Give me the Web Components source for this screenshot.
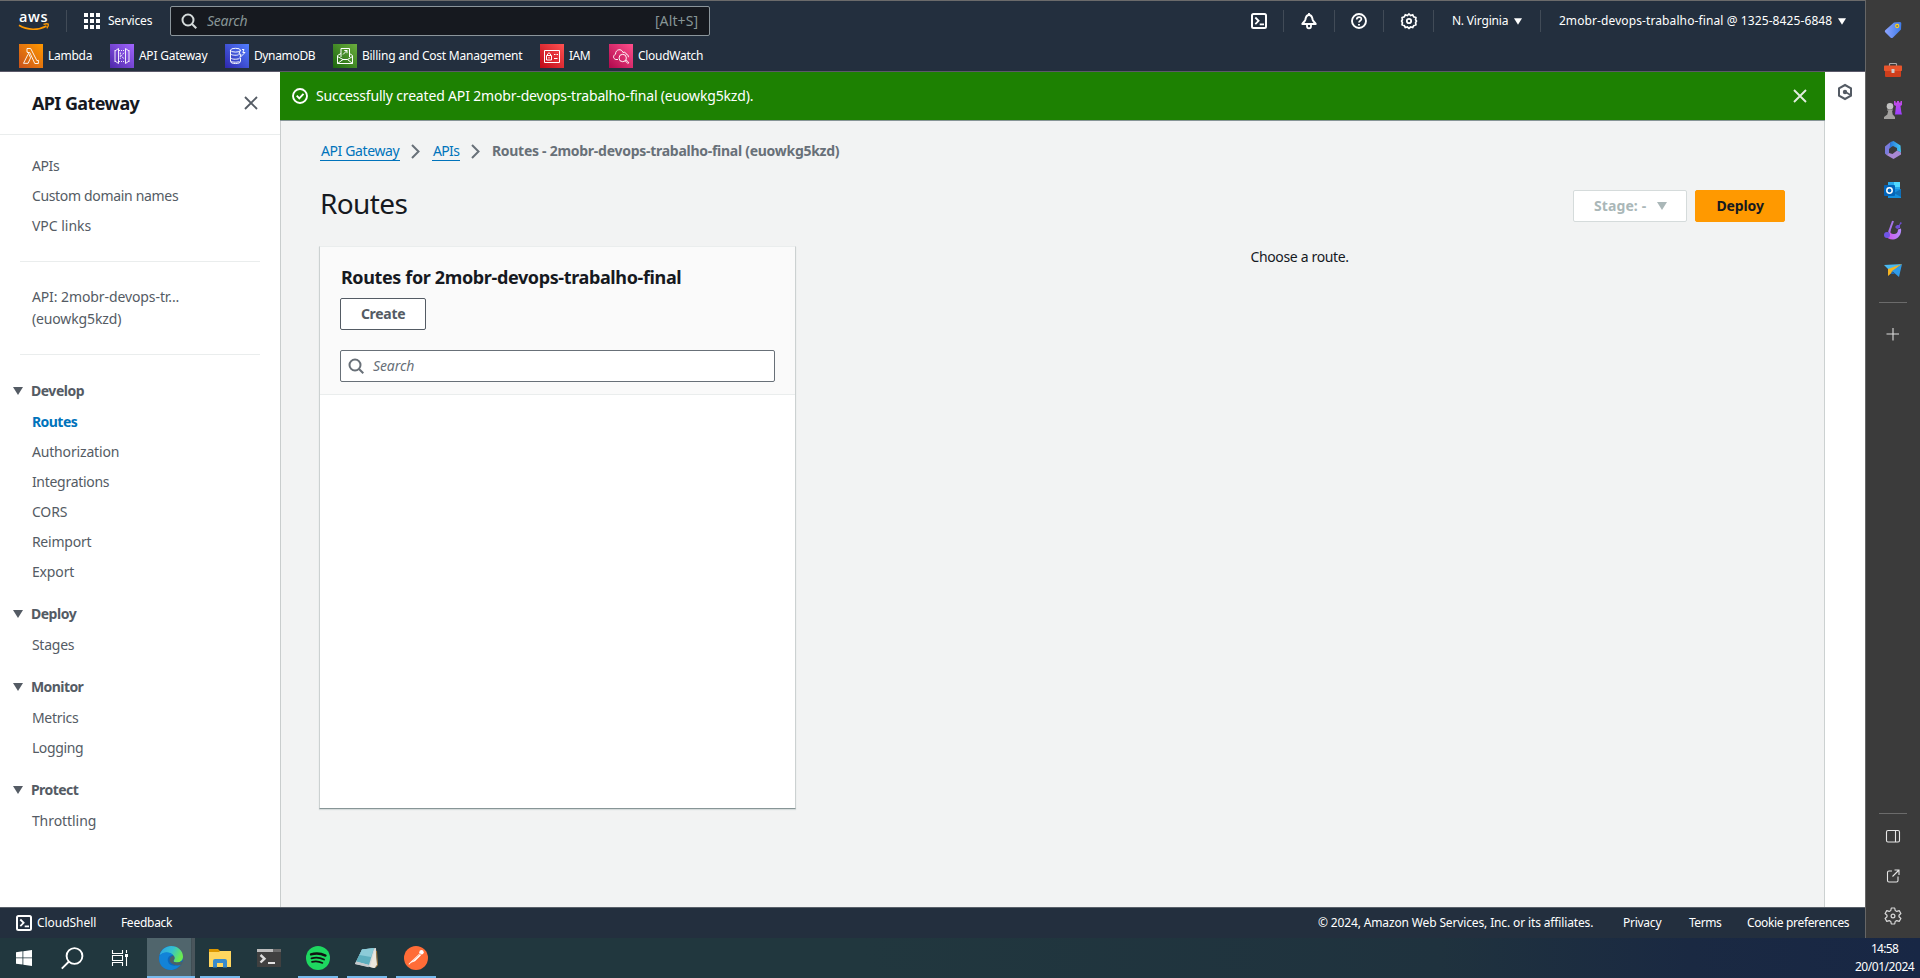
<!DOCTYPE html>
<html lang="en">
<head>
<meta charset="utf-8">
<title>API Gateway - Routes</title>
<style>
html,body{margin:0;height:100%}
body{font:14px/22px "Noto Sans","Open Sans",sans-serif;color:#16191f;overflow:hidden;background:#f2f3f3}
</style>
</head>
<body>
<desktop-screen></desktop-screen>
<script>
const ICONS = {
aws:['0 0 32 20','<path d="M1 14.2c8.500 5.300 19.500 5.200 27.500.8" fill="none" stroke="#f90" stroke-width="1.700"/><path d="M25.500 13.300q3.500-1 4.800-.2.600 1.600-1.500 4.300" fill="none" stroke="#f90" stroke-width="1.300"/>'],
grid:['0 0 16 16','<path fill="#fff" d="M0 0h4v4H0zM6 0h4v4H6zM12 0h4v4h-4zM0 6h4v4H0zM6 6h4v4H6zM12 6h4v4h-4zM0 12h4v4H0zM6 12h4v4H6zM12 12h4v4h-4z"/>'],
search:['0 0 16 16','<g fill="none" stroke="currentColor" stroke-width="2"><circle cx="7" cy="7" r="5.500"/><path d="m11 11 4.300 4.300"/></g>'],
shell:['0 0 16 16','<g fill="none" stroke="#fff" stroke-width="2"><rect x="1" y="1" width="14" height="14" rx="1.500"/><path d="m4.300 4.500 3.300 3.300-3.300 3.300M8.700 11.300H13" stroke-width="1.800"/></g>'],
bell:['0 0 16 16','<path d="M8 2C5.500 2 4.800 4 4.400 6.500 4 8.300 2.300 9.300 1.300 11h13.400c-1-1.700-2.700-2.700-3.100-4.500C11.200 4 10.500 2 8 2Z" fill="none" stroke="#fff" stroke-width="2" stroke-linejoin="round"/><path d="M8 0v2M6 12v1.300a2 2 0 0 0 4 0V12" fill="none" stroke="#fff" stroke-width="1.800"/>'],
help:['0 0 16 16','<g fill="none" stroke="#fff" stroke-width="1.900"><circle cx="8" cy="8" r="7"/><path d="M5.700 6.500C5.800 3.200 10.400 3.400 10.400 6c0 1.800-2.400 1.600-2.400 3.500" stroke-width="1.700"/><path d="M8 10.900v1.700"/></g>'],
gear:['0 0 16 16','<path d="m8 1 1.600 1.500 2.100-.7 1 2 2.200.7-.3 2.200L15.500 8l-.9 1.700.3 2.100-2.200.8-1 1.900-2.100-.5L8 15.300l-1.600-1.300-2.100.5-1-1.900-2.200-.8.300-2.100L.6 8l.8-1.300-.3-2.200 2.200-.7 1-2 2.100.7Z" fill="none" stroke="#fff" stroke-width="1.700"/><circle cx="8" cy="8" r="2.200" fill="none" stroke="#fff" stroke-width="1.800"/>'],
caret:['0 0 10 8','<path d="M0 0h10L5 8Z" fill="currentColor"/>'],
close:['0 0 14 14','<path d="m1 1 12 12M13 1 1 13" fill="none" stroke="currentColor" stroke-width="1.900"/>'],
check:['0 0 16 16','<g fill="none" stroke="#fff" stroke-width="1.900"><circle cx="8" cy="8" r="7"/><path d="m4.700 7.700 2.600 2.700 4.200-4.500"/></g>'],
chev:['0 0 9 15','<path d="m1 1 6.500 6.500L1 14" fill="none" stroke="#687078" stroke-width="2"/>'],
hex:['0 0 14 16','<path d="m7 1 6 3.300v7.400L7 15l-6-3.300V4.300Z" fill="none" stroke="#545b64" stroke-width="2"/><circle cx="7" cy="8" r="2.200" fill="#545b64"/><path d="m7.500 8 5 3" stroke="#545b64" stroke-width="1.600"/>'],
lambda:['0 0 24 24','<defs><linearGradient id="g" x1="0" y1="1" x2="1" y2="0"><stop stop-color="#c8511b"/><stop offset="1" stop-color="#f90"/></linearGradient></defs><path fill="url(#g)" d="M0 0h24v24H0z"/><path d="M9 10.300 4.500 19.300h4.600l2.500-5.500L9 8.200H8V4.500h3.700l6.200 12.200 1.500-.4v3.200h-3.600l-4-8.700-1-2.300H8.500" fill="none" stroke="#fff" stroke-width=".9"/>'],
apigw:['0 0 24 24','<defs><linearGradient id="g" x1="0" y1="1" x2="1" y2="0"><stop stop-color="#4d27a8"/><stop offset="1" stop-color="#a166ff"/></linearGradient></defs><path fill="url(#g)" d="M0 0h24v24H0z"/><g fill="none" stroke="#fff" stroke-width=".9"><path d="M5 6v12M5 7l3.500-2.500v15L5 17M19 6v12M19 7l-3.500-2.500v15L19 17"/><path d="M9 6.500h6M9 17.500h6" stroke-dasharray="1 1"/><path d="M10.300 8.500v6.300M14 8.700l-2.600 3L14 15" stroke-dasharray="2 .8"/></g>'],
dynamo:['0 0 24 24','<defs><linearGradient id="g" x1="0" y1="1" x2="1" y2="0"><stop stop-color="#2e27ad"/><stop offset="1" stop-color="#527fff"/></linearGradient></defs><path fill="url(#g)" d="M0 0h24v24H0z"/><g fill="none" stroke="#fff" stroke-width=".95"><ellipse cx="10.500" cy="6.200" rx="5" ry="1.900"/><path d="M5.500 6v11.500c0 2.700 10 2.700 10 0V14M5.500 9.300c0 2 5.500 2.400 8 1.500M5.500 13.300c0 2.200 6 2.400 9 1.200M5.500 16.300c0 2 6 2.400 9 1.200M17 5.500h2l-1.200 3H20l-5 5 .9-3.300h-2L15.500 6"/></g>'],
billing:['0 0 24 24','<defs><linearGradient id="g" x1="0" y1="1" x2="1" y2="0"><stop stop-color="#1b660f"/><stop offset="1" stop-color="#6cae3e"/></linearGradient></defs><path fill="url(#g)" d="M0 0h24v24H0z"/><g fill="none" stroke="#fff" stroke-width="1"><path d="M8 13V4.500h8.500V13M10 10.500l4-4M11.300 6.500H14v2.700M8 9.500l-3.500 2v8h15v-8l-3-2M4.500 12.500l5.500 3M19.500 12.500l-5 3M4.500 19.500l5.500-4h4.500l5 4"/></g>'],
iam:['0 0 24 24','<defs><linearGradient id="g" x1="0" y1="1" x2="1" y2="0"><stop stop-color="#bd0816"/><stop offset="1" stop-color="#ff5252"/></linearGradient></defs><path fill="url(#g)" d="M0 0h24v24H0z"/><g fill="none" stroke="#fff" stroke-width="1"><path d="M4.500 6.500h15v12h-15zM6.500 11.500h5v4.500h-5zM7.500 11.500v-1.500q1.500-2.500 3 0v1.500M14 10.500h1.500M16.500 10.500H18M14 14.500h3.500"/><path d="M9 13v1.500"/></g>'],
watch:['0 0 24 24','<defs><linearGradient id="g" x1="0" y1="1" x2="1" y2="0"><stop stop-color="#b0084d"/><stop offset="1" stop-color="#ff4f8b"/></linearGradient></defs><path fill="url(#g)" d="M0 0h24v24H0z"/><g fill="none" stroke="#fff" stroke-width=".95"><path d="M9 15.500H6.800C4 14.800 3.800 11.500 6.500 10.200 6.500 5.200 12.500 4 14 8.500c2-1 3 .5 3 1.500 1.500.3 2.500 1.300 2.400 3.200"/><circle cx="13.700" cy="14" r="3.700"/><path d="m16 16.500 2.800 3q1-.2.800-1.200L17 15.800"/></g>'],
tag:['0 0 18 18','<defs><linearGradient id="g"><stop stop-color="#8ea4ff"/><stop offset="1" stop-color="#3e7be8"/></linearGradient></defs><path d="M10 1.500 16 1q1.500 0 1.300 1.500L17 8.500 9 16.500q-1.300 1-2.500 0L1.200 11.300q-.9-1 0-2Z" fill="url(#g)"/><circle cx="13.200" cy="5" r="1.600" fill="#777" stroke="#ffd11a" stroke-width="1.100"/>'],
toolbox:['0 0 18 18','<path d="M5.500 5V3.300q0-.8.800-.8h5.400q.8 0 .8.800V5" fill="none" stroke="#aaa" stroke-width="1.200"/><rect y="4.500" width="18" height="5.500" rx=".7" fill="#e9552c"/><path d="M1 10h16v5q0 1-1 1H2q-1 0-1-1Z" fill="#cf3e1c"/><rect x="7.500" y="8" width="3" height="4" rx=".5" fill="#ccc"/>'],
chess:['0 0 18 18','<defs><linearGradient id="g" y1="0" y2="1" x2="0"><stop stop-color="#c44be4"/><stop offset="1" stop-color="#9b40ff"/></linearGradient></defs><path d="M10 0h1.500v1.500H13V0h2v1.500h1.500V0H18v4l-1.500 1 .8 6 .7 2.500h-7L12 5l-2-1Z" fill="url(#g)"/><circle cx="6" cy="5.300" r="3.300" fill="#c2c2c2"/><path d="M3 8.500h6v1H8l.7 4L11 16v2H0v-2l3.300-2.500 1-4H3Z" fill="#a3a19f"/>'],
m365:['0 0 18 18','<defs><linearGradient id="g"><stop stop-color="#2771d8"/><stop offset="1" stop-color="#43c9f5"/></linearGradient></defs><path d="M1 5.500 6.500 1v5.500L5 8v4.500L2.500 14 1 12.500Z" fill="#7a7bdc"/><path d="m6.500 1 3-1 7 4.500.5 7-4-2V7l-4-2-3.500 2Z" fill="url(#g)"/><path d="m5 12 3.500 1 4.500-3.500 4 2v2L9.500 18l-7-4Z" fill="#a889d3"/>'],
outlook:['0 0 18 18','<path d="M4 1h12v10H4z" fill="#28a8ea"/><path d="M10 1h6v5h-6z" fill="#50d9ff"/><path d="M4 8h13v9H4z" fill="#1490df"/><path d="M17 8v8l-7-4Z" fill="#0f6fb8"/><rect y="4" width="11" height="11" rx="1" fill="#0364b8"/><circle cx="5.500" cy="9.500" r="2.700" fill="none" stroke="#fff" stroke-width="1.500"/>'],
design:['0 0 18 18','<defs><linearGradient id="g"><stop stop-color="#d04ee5"/><stop offset="1" stop-color="#b58cff"/></linearGradient></defs><path d="M7 8.500Q5 12.500 9 13c3 .5 5-1 5-4.500l3-1C18 13 14 18.500 9 18.500q-5.500 0-7-4Z" fill="url(#g)"/><path d="M9 0 5 11" stroke="#a675e9" stroke-width="2"/><circle cx="3" cy="14" r="3" fill="#6f55e7"/><path d="m11 6 2-2 2 0 1.500-3L18 2l-2 2v3l-3 1Z" fill="#6e4ed5"/>'],
plane:['0 0 18 18','<path d="M0 4 18 3 5 9Z" fill="#49b9f0"/><path d="M18 3 4 8v7Z" fill="#f7b522"/><path d="M18 3 8 10l7 6Z" fill="#2f9be8"/><path d="m8 10-1 3 4 0Z" fill="#1767b8"/>'],
plus:['0 0 16 16','<path d="M8 2v12.500M1.500 8H14" stroke="#ddd" stroke-width="1.100"/>'],
panel:['0 0 16 16','<g fill="none" stroke="#e6e6e6" stroke-width="1.100"><rect x="1.500" y="2.500" width="13" height="11.500" rx="1.500"/><path d="M10.500 2.500V14"/></g>'],
ext:['0 0 16 16','<path d="M7 3H4Q2.500 3 2.500 4.500v8Q2.500 14 4 14h7.500q1.500 0 1.500-1.500V8.500M9.500 2h4.500v5M14 2 7.500 8.500" fill="none" stroke="#e6e6e6" stroke-width="1.100"/>'],
cog:['0 0 18 18','<path d="M7.300 1h3.400l.5 2.500 1.600.9 2.400-.8 1.700 2.900L15 8.200v1.600l1.900 1.700-1.700 2.900-2.400-.8-1.600.9-.5 2.500H7.300l-.5-2.500-1.600-.9-2.400.8-1.700-2.900L3 9.800V8.200L1.100 6.500l1.700-2.900 2.400.8 1.600-.9Z" fill="none" stroke="#d8d8d8" stroke-width="1.200" stroke-linejoin="round"/><circle cx="9" cy="9" r="1.900" fill="none" stroke="#d8d8d8" stroke-width="1.200"/>'],
win:['0 0 16 16','<path d="M0 2.200 6.500 1.300v6.200H0zM7.300 1.200 16 0v7.500H7.300zM0 8.300h6.500v6.300L0 13.700zM7.300 8.300H16V16l-8.700-1.200z" fill="#fff"/>'],
find:['0 0 22 22','<g fill="none" stroke="#fff" stroke-width="1.900"><circle cx="13.500" cy="9" r="7.900"/><path d="M8 14.500 .8 21.700"/></g>'],
tasks:['0 0 16 16','<path d="M.5 0v3.500h10V0M.5 16v-3.500h10V16M.5 5.500h10v5H.5zM14.500 0v3M14.500 7v9" fill="none" stroke="#fff" stroke-width="1.100"/><path d="M13 4h3v3h-3z" fill="#fff"/>'],
edge:['0 0 24 24','<defs><linearGradient id="g" x1="0" x2="1" y2=".4"><stop stop-color="#2b9fe8"/><stop offset=".55" stop-color="#35c1d0"/><stop offset="1" stop-color="#6bea50"/></linearGradient></defs><circle cx="12" cy="12" r="12" fill="#0d68bd"/><path d="M.5 9.500C2 3.500 7 0 12 0c7 0 12 5 12 10.500 0 4-3 6-6 6-2.500 0-4-1-3.500-2 1-1.500 1.200-3 .5-4C13.500 6.500 5 5 .5 9.500Z" fill="url(#g)"/><path d="M.2 10.500C3 5 11 5 14 9c-4 0-6 3-5 6.500 1 3.500 5 6 13 2.500-3 5-9 7-13.500 5.500C2 22-.5 16 .2 10.500Z" fill="#1283d8"/><path d="M14.700 9.500q2 3-.5 5.500c1 1.800 5 2 7.500.5l2 1-1.500 2.200c-2 1-4.500 1-6.200.3C9 17 9 11 14.700 9.500Z" fill="#4c6069"/>'],
files:['0 0 22 19','<path d="M0 2h22v16H0z" fill="#ffd65f"/><path d="M0 0h9l2 2-1 1H0Z" fill="#dc9700"/><path d="M4 18.500V12q0-2 2-2h10q2 0 2 2v6.500h-4V14H8v4.500Z" fill="#388bcc"/>'],
term:['0 0 24 18','<path d="M0 0h24v18H0z" fill="#404040"/><path d="M0 0h16v3H0z" fill="#bdbdbd"/><path d="M16 0h8v3h-8z" fill="#6b6b6b"/><path d="m3.500 6 4 3.700-4 3.800" fill="none" stroke="#ddd" stroke-width="2.400"/><path d="M11 14h7" stroke="#fff" stroke-width="1.700"/>'],
spotify:['0 0 24 24','<circle cx="12" cy="12" r="12" fill="#1ed760"/><g fill="none" stroke="#111" stroke-linecap="round"><path d="M5 8.400c5-1.500 10-1 14.500 1.200" stroke-width="2.300"/><path d="M5.500 12.300c4.400-1.200 8.500-.8 12.500 1.200" stroke-width="1.900"/><path d="M6 15.900c4-1 7-.6 10.500 1.100" stroke-width="1.600"/></g>'],
note:['0 0 24 24','<path d="M7 3.500 21 2l1 17-2 3L0 18Z" fill="#d9dadb"/><path d="M7 3.500 19 2l-5 17L1 15.500Z" fill="#5eafbf"/><path d="m7 3.500 12-1.500-3 9L4.500 9Z" fill="#8ccbd8"/><path d="m1 15.500 13 3.500-.5 2.200L0 18Z" fill="#c4c9cc"/><path d="m20 3 2 16-3 3-4-1Z" fill="#ece8de"/><path d="m21.500 5 1 14-2 2.500" fill="none" stroke="#a37b3c"/>'],
postman:['0 0 24 24','<circle cx="12" cy="12" r="12" fill="#ff6c37"/><circle cx="17.500" cy="6.300" r="2.200" fill="#fff"/><path d="m15.500 7.500 1.500 1.700-6 6-4 1.500-2 2-.5-.7 3-3Z" fill="#fff"/><path d="m8.500 15 8-7.500" stroke="#ff9a72" stroke-width=".7"/>']
};

/* Registers an element whose shadow root is cloned from the given markup. */
function component(name, html, setup) {
  const tpl = document.createElement('template');
  tpl.innerHTML = '<style>:host{box-sizing:border-box}*{box-sizing:border-box}</style>' + html;
  customElements.define(name, class extends HTMLElement {
    constructor() {
      super();
      this.attachShadow({mode:'open'}).append(tpl.content.cloneNode(true));
    }
    connectedCallback() { if (setup && !this.ready) { this.ready = true; setup.call(this, this.shadowRoot); } }
  });
}

component('desktop-screen', `<style>
:host{display:grid;grid-template:938px 40px/1fr 55px;width:1920px;height:978px}
console-page{min-width:0}task-bar{grid-column:1/3}
</style><console-page></console-page><edge-rail></edge-rail><task-bar></task-bar>`);

component('console-page', `<style>
:host{display:grid;grid-template-rows:72px 835px 31px}
.mid{display:grid;grid-template-columns:281px 1fr 40px}
.tools{background:#fff;display:flex;justify-content:center;padding:12px 0}
main{display:flex;flex-direction:column;border-right:1px solid #ccd1d1;background:#f2f3f3;min-width:0}
.main{padding:20px 39px 0 38px}
</style><aws-header></aws-header>
<div class="mid"><side-nav></side-nav><main><flash-bar></flash-bar><div class="main"><page-crumbs></page-crumbs><routes-view></routes-view></div></main>
<div class="tools"><ui-icon name="hex" w="14" h="16"></ui-icon></div></div><aws-footer></aws-footer>`);

component('aws-header', `<style>
:host{display:block;background:#232f3e;color:#fff;border-top:1px solid #6b6b6b;border-bottom:1px solid #5b5969;font-size:12px}
.top{display:flex;align-items:center;height:40px;padding-left:18px}
.logo{display:grid;width:32px;height:22px;margin-right:16px}
.logo>*{grid-area:1/1}.logo b{font:600 14.500px/13px "Open Sans",sans-serif}
.logo ui-icon{align-self:start;margin-top:1px}
i.d{width:1px;height:22px;background:#414b57;flex:none}
.box{display:flex;align-items:center;width:540px;height:30px;border:1px solid #8b959b;border-radius:2px;background:#16191f;color:#879596;font-size:14px;margin-left:17px;padding:0 10px 0 10px}
.box ui-icon{color:#d5dbdb}.box em{margin-left:9px}.box span{margin-left:auto}
.right{display:flex;align-items:center;margin-left:541px}
.fav{display:flex;height:30px;align-items:center;padding-left:19px}
</style><div class="top"><div class="logo"><b><fit-text w="31">aws</fit-text></b><ui-icon name="aws" w="32" h="20"></ui-icon></div><i class="d"></i>
<ui-icon name="grid" w="16" h="16" style="margin:0 7px 0 17px"></ui-icon><fit-text w="46">Services</fit-text>
<div class="box"><ui-icon name="search" w="16" h="16"></ui-icon><em><fit-text w="42">Search</fit-text></em><span><fit-text w="45">[Alt+S]</fit-text></span></div>
<div class="right"><ui-icon name="shell" w="16" h="16"></ui-icon><i class="d" style="margin:0 17px 0 16px"></i><ui-icon name="bell" w="16" h="16"></ui-icon><i class="d" style="margin:0 16px 0 17px"></i><ui-icon name="help" w="16" h="16"></ui-icon><i class="d" style="margin:0 17px 0 16px"></i><ui-icon name="gear" w="16" h="16"></ui-icon><i class="d" style="margin:0 17px 0 16px"></i><fit-text w="58">N. Virginia</fit-text><ui-icon name="caret" w="8" h="7" style="margin-left:5px"></ui-icon><i class="d" style="margin:0 17px 0 18px"></i><fit-text w="275">2mobr-devops-trabalho-final @ 1325-8425-6848</fit-text><ui-icon name="caret" w="8" h="7" style="margin-left:5px"></ui-icon></div></div>
<div class="fav">
<fav-link icon="lambda" style="width:91px"><fit-text w="46">Lambda</fit-text></fav-link>
<fav-link icon="apigw" style="width:115px"><fit-text w="70">API Gateway</fit-text></fav-link>
<fav-link icon="dynamo" style="width:108px"><fit-text w="63">DynamoDB</fit-text></fav-link>
<fav-link icon="billing" style="width:207px"><fit-text w="162">Billing and Cost Management</fit-text></fav-link>
<fav-link icon="iam" style="width:69px"><fit-text w="23">IAM</fit-text></fav-link>
<fav-link icon="watch" style="width:110px"><fit-text w="67">CloudWatch</fit-text></fav-link></div>`);

component('fav-link', `<style>:host{display:flex;align-items:center;gap:4px;flex:none}</style><ui-icon w="24" h="24"></ui-icon><slot></slot>`,
function(r){ r.querySelector('ui-icon').setAttribute('name', this.getAttribute('icon')); });

component('side-nav', `<style>
:host{display:block;background:#fff;border-right:1px solid #c9cdcd;color:#545b64}
header{height:63px;display:flex;align-items:center;justify-content:space-between;padding:0 22px 0 31px;border-bottom:1px solid #eaeded}
h2{margin:0 0 1px;font-size:18px;line-height:24px;color:#16191f;font-weight:700}
nav{padding-top:16px}
hr{border:0;height:1px;background:#eaeded;margin:20px 20px 24px}
.api{padding:0 31px;height:44px;display:grid;grid-template-rows:22px 22px}
</style><header><h2><fit-text w="109">API Gateway</fit-text></h2><ui-icon name="close" w="14" h="14"></ui-icon></header>
<nav><nav-item><fit-text w="29">APIs</fit-text></nav-item><nav-item><fit-text w="148">Custom domain names</fit-text></nav-item><nav-item><fit-text w="61">VPC links</fit-text></nav-item>
<hr><div class="api"><fit-text w="149">API: 2mobr-devops-tr...</fit-text><fit-text w="91">(euowkg5kzd)</fit-text></div><hr style="margin-top:24px;margin-bottom:21px">
<nav-group><fit-text slot="title" w="55">Develop</fit-text>
<nav-item current><fit-text w="47">Routes</fit-text></nav-item><nav-item><fit-text w="89">Authorization</fit-text></nav-item><nav-item><fit-text w="79">Integrations</fit-text></nav-item><nav-item><fit-text w="37">CORS</fit-text></nav-item><nav-item><fit-text w="61">Reimport</fit-text></nav-item><nav-item><fit-text w="44">Export</fit-text></nav-item></nav-group>
<nav-group><fit-text slot="title" w="47">Deploy</fit-text><nav-item><fit-text w="44">Stages</fit-text></nav-item></nav-group>
<nav-group><fit-text slot="title" w="54">Monitor</fit-text><nav-item><fit-text w="48">Metrics</fit-text></nav-item><nav-item><fit-text w="53">Logging</fit-text></nav-item></nav-group>
<nav-group><fit-text slot="title" w="49">Protect</fit-text><nav-item><fit-text w="66">Throttling</fit-text></nav-item></nav-group></nav>`);
component('nav-item', `<style>:host{display:flex;align-items:center;height:30px;padding-left:31px}:host([current]){font-weight:700;color:#0073bb}</style><slot></slot>`);
component('nav-group', `<style>:host{display:block;margin-bottom:12px}.h{display:flex;align-items:center;height:31px;font-weight:700;padding:0 0 1px 13px;gap:7px}</style><div class="h"><ui-icon name="caret" w="10" h="8"></ui-icon><slot name="title"></slot></div><slot></slot>`);

component('flash-bar', `<style>
:host{display:flex;align-items:center;height:49px;background:#1d8102;color:#fff;border-bottom:1px solid #879596;margin:0 -1px;padding:0 18px 0 12px}
fit-text{margin-left:7px}.x{margin-left:auto;color:#e2ecdf}</style>
<ui-icon name="check" w="16" h="16"></ui-icon><fit-text w="439">Successfully created API 2mobr-devops-trabalho-final (euowkg5kzd).</fit-text><ui-icon class="x" name="close" w="14" h="14"></ui-icon>`);

component('page-crumbs', `<style>
:host{display:flex;align-items:center;height:20px;color:#687078;margin-left:1px}
a{color:#0073bb;border-bottom:1px solid #0073bb;height:20px;line-height:20px}
ui-icon{margin:0 12px 0 11px}a+ui-icon+a+ui-icon{margin-right:11px}</style>
<a><fit-text w="80">API Gateway</fit-text></a><ui-icon name="chev" w="9" h="15"></ui-icon><a><fit-text w="28">APIs</fit-text></a><ui-icon name="chev" w="9" h="15"></ui-icon><b><fit-text w="349">Routes - 2mobr-devops-trabalho-final (euowkg5kzd)</fit-text></b>`);

component('routes-view', `<style>
:host{display:block}
.head{display:flex;align-items:flex-start;height:60px;margin-top:25px}
h1{font:400 28px/36px "Noto Sans",sans-serif;margin:-1px auto 0 0}
.head ui-button{margin-top:4px}
.body{display:grid;grid-template-columns:477px 1fr;}
.hint{display:flex;justify-content:center;padding:0 0 0 18px;height:22px}
</style><div class="head"><h1><fit-text w="89">Routes</fit-text></h1><ui-button kind="off" style="width:114px;margin-right:8px"><fit-text w="54">Stage: -</fit-text><ui-icon name="caret" w="10" h="8" style="margin-left:10px"></ui-icon></ui-button><ui-button kind="main" style="width:90px"><fit-text w="49">Deploy</fit-text></ui-button></div>
<div class="body"><routes-card></routes-card><div class="hint"><fit-text w="100">Choose a route.</fit-text></div></div>`);

component('ui-button', `<style>:host{display:flex;align-items:center;justify-content:center;height:32px;border:1px solid #545b64;border-radius:2px;background:#fff;color:#545b64;font-weight:700}
:host([kind=off]){border-color:#d5dbdb;color:#aab7b8}:host([kind=main]){border-color:#f90;background:#f90;color:#16191f}</style><slot></slot>`);

component('routes-card', `<style>
:host{display:block;height:563px;background:#fff;border:1px solid #ccd1d1;border-top-color:#eaeded;border-bottom-color:#879596;box-shadow:0 1px 1px #d5dbdb}
header{background:#fafafa;border-bottom:1px solid #eaeded;height:148px;padding:19px 20px}
h2{font-size:18px;line-height:22px;margin:0 0 10px}
.s{display:flex;align-items:center;margin-top:20px;height:32px;border:1px solid #687078;border-radius:2px;background:#fff;color:#687078;padding-left:7px;gap:8px}
</style><header><h2><fit-text w="342">Routes for 2mobr-devops-trabalho-final</fit-text></h2><ui-button style="width:86px"><fit-text w="46">Create</fit-text></ui-button>
<div class="s"><ui-icon name="search" w="16" h="16"></ui-icon><em><fit-text w="43">Search</fit-text></em></div></header>`);

component('aws-footer', `<style>
:host{display:flex;align-items:center;background:#232f3e;color:#fff;border-top:1px solid #596069;padding:0 15px 0 16px;font-size:12px}
.r{display:flex;margin-left:auto;gap:26px}</style>
<ui-icon name="shell" w="16" h="16" style="margin-right:4px"></ui-icon><fit-text w="61">CloudShell</fit-text><fit-text w="53" style="margin-left:23px">Feedback</fit-text>
<div class="r"><fit-text w="277" style="margin-right:2px">© 2024, Amazon Web Services, Inc. or its affiliates.</fit-text><fit-text w="40">Privacy</fit-text><fit-text w="34" style="margin-right:-2px">Terms</fit-text><fit-text w="104">Cookie preferences</fit-text></div>`);

component('edge-rail', `<style>
:host{display:flex;flex-direction:column;align-items:center;background:#3b3b3b;border-left:1px solid #666;padding:21px 0 13px}
.a,.b{display:flex;flex-direction:column;align-items:center}.a{gap:22px}.b{margin-top:auto;gap:24px}
hr{width:28px;height:1px;border:0;background:#6b6b6b;margin:0}.a hr{margin:1px 0}</style>
<div class="a"><ui-icon name="tag" w="18" h="18"></ui-icon><ui-icon name="toolbox" w="18" h="18"></ui-icon><ui-icon name="chess" w="18" h="18"></ui-icon><ui-icon name="m365" w="18" h="18"></ui-icon><ui-icon name="outlook" w="18" h="18"></ui-icon><ui-icon name="design" w="18" h="18"></ui-icon><ui-icon name="plane" w="18" h="18"></ui-icon><hr><ui-icon name="plus" w="16" h="16"></ui-icon></div>
<div class="b"><hr style="margin-bottom:-10px"><ui-icon name="panel" w="16" h="16"></ui-icon><ui-icon name="ext" w="16" h="16"></ui-icon><ui-icon name="cog" w="18" h="18" style="margin-top:-1px"></ui-icon></div>`);

component('task-bar', `<style>
:host{display:flex;background:linear-gradient(90deg,#21373e 0%,#21373e 45%,#1f323e 75%,#1a2942 88%,#182745 100%);padding-right:5px}
.clock{margin-left:auto;color:#fff;font-size:12px;line-height:18px;padding-top:2px;display:flex;flex-direction:column;align-items:center}</style>
<task-button icon="win" w="16" h="16" style="width:48px"></task-button><task-button icon="find" w="22" h="22" style="width:48px"></task-button><task-button icon="tasks" w="16" h="16" style="width:48px"></task-button><task-button icon="edge" w="24" h="24" active style="width:51px;margin-left:3px"></task-button>
<task-button icon="files" w="22" h="19" open style="width:44px"></task-button><task-button icon="term" w="24" h="18" style="width:54px"></task-button><task-button icon="spotify" w="24" h="24" open style="width:44px"></task-button><task-button icon="note" w="24" h="24" open style="width:54px"></task-button><task-button icon="postman" w="24" h="24" open style="width:44px"></task-button>
<div class="clock"><fit-text w="29">14:58</fit-text><fit-text w="61">20/01/2024</fit-text></div>`);
component('task-button', `<style>:host{display:grid;place-items:center;height:40px}ui-icon{grid-area:1/1}
i{display:none;grid-area:1/1;align-self:end;width:40px;height:2px;background:#76b9ed}:host([open]) i{display:block}
:host([active]) i{display:block;width:48px;justify-self:start}:host([active]){background:linear-gradient(90deg,#50656c 44px,#35474d 44px,#4a565c 45px,#4a565c 48px,transparent 48px)}:host([active]) ui-icon{margin-right:3px}</style><ui-icon></ui-icon><i></i>`,
function(r){ const i=r.querySelector('ui-icon'); i.setAttribute('w',this.getAttribute('w')); i.setAttribute('h',this.getAttribute('h')); i.setAttribute('name',this.getAttribute('icon')); });

/* Inline SVG icon, looked up by name. */
customElements.define('ui-icon', class extends HTMLElement {
  static observedAttributes = ['name','w','h'];
  constructor(){ super(); this.attachShadow({mode:'open'}); }
  attributeChangedCallback(){
    const d = ICONS[this.getAttribute('name')]; if (!d) return;
    const w = this.getAttribute('w'), h = this.getAttribute('h');
    this.shadowRoot.innerHTML = `<style>:host{display:block;flex:none;width:${w}px;height:${h}px}svg{display:block;overflow:visible}</style><svg width="${w}" height="${h}" viewBox="${d[0]}">${d[1]}</svg>`;
  }
});

/* Single-line label tracked to fill w pixels, with a small side bearing at each end. */
customElements.define('fit-text', class extends HTMLElement {
  constructor(){
    super();
    this.attachShadow({mode:'open'}).innerHTML = '<style>:host{display:block;flex:none;white-space:nowrap}span{display:inline-block;margin-left:.9px}</style><span><slot></slot></span>';
  }
  connectedCallback(){
    const w = +this.getAttribute('w'), s = this.shadowRoot.querySelector('span');
    this.style.width = w + 'px';
    s.style.letterSpacing = (w - 1.6 - s.getBoundingClientRect().width) / this.textContent.length + 'px';
  }
});
</script>
</body>
</html>
